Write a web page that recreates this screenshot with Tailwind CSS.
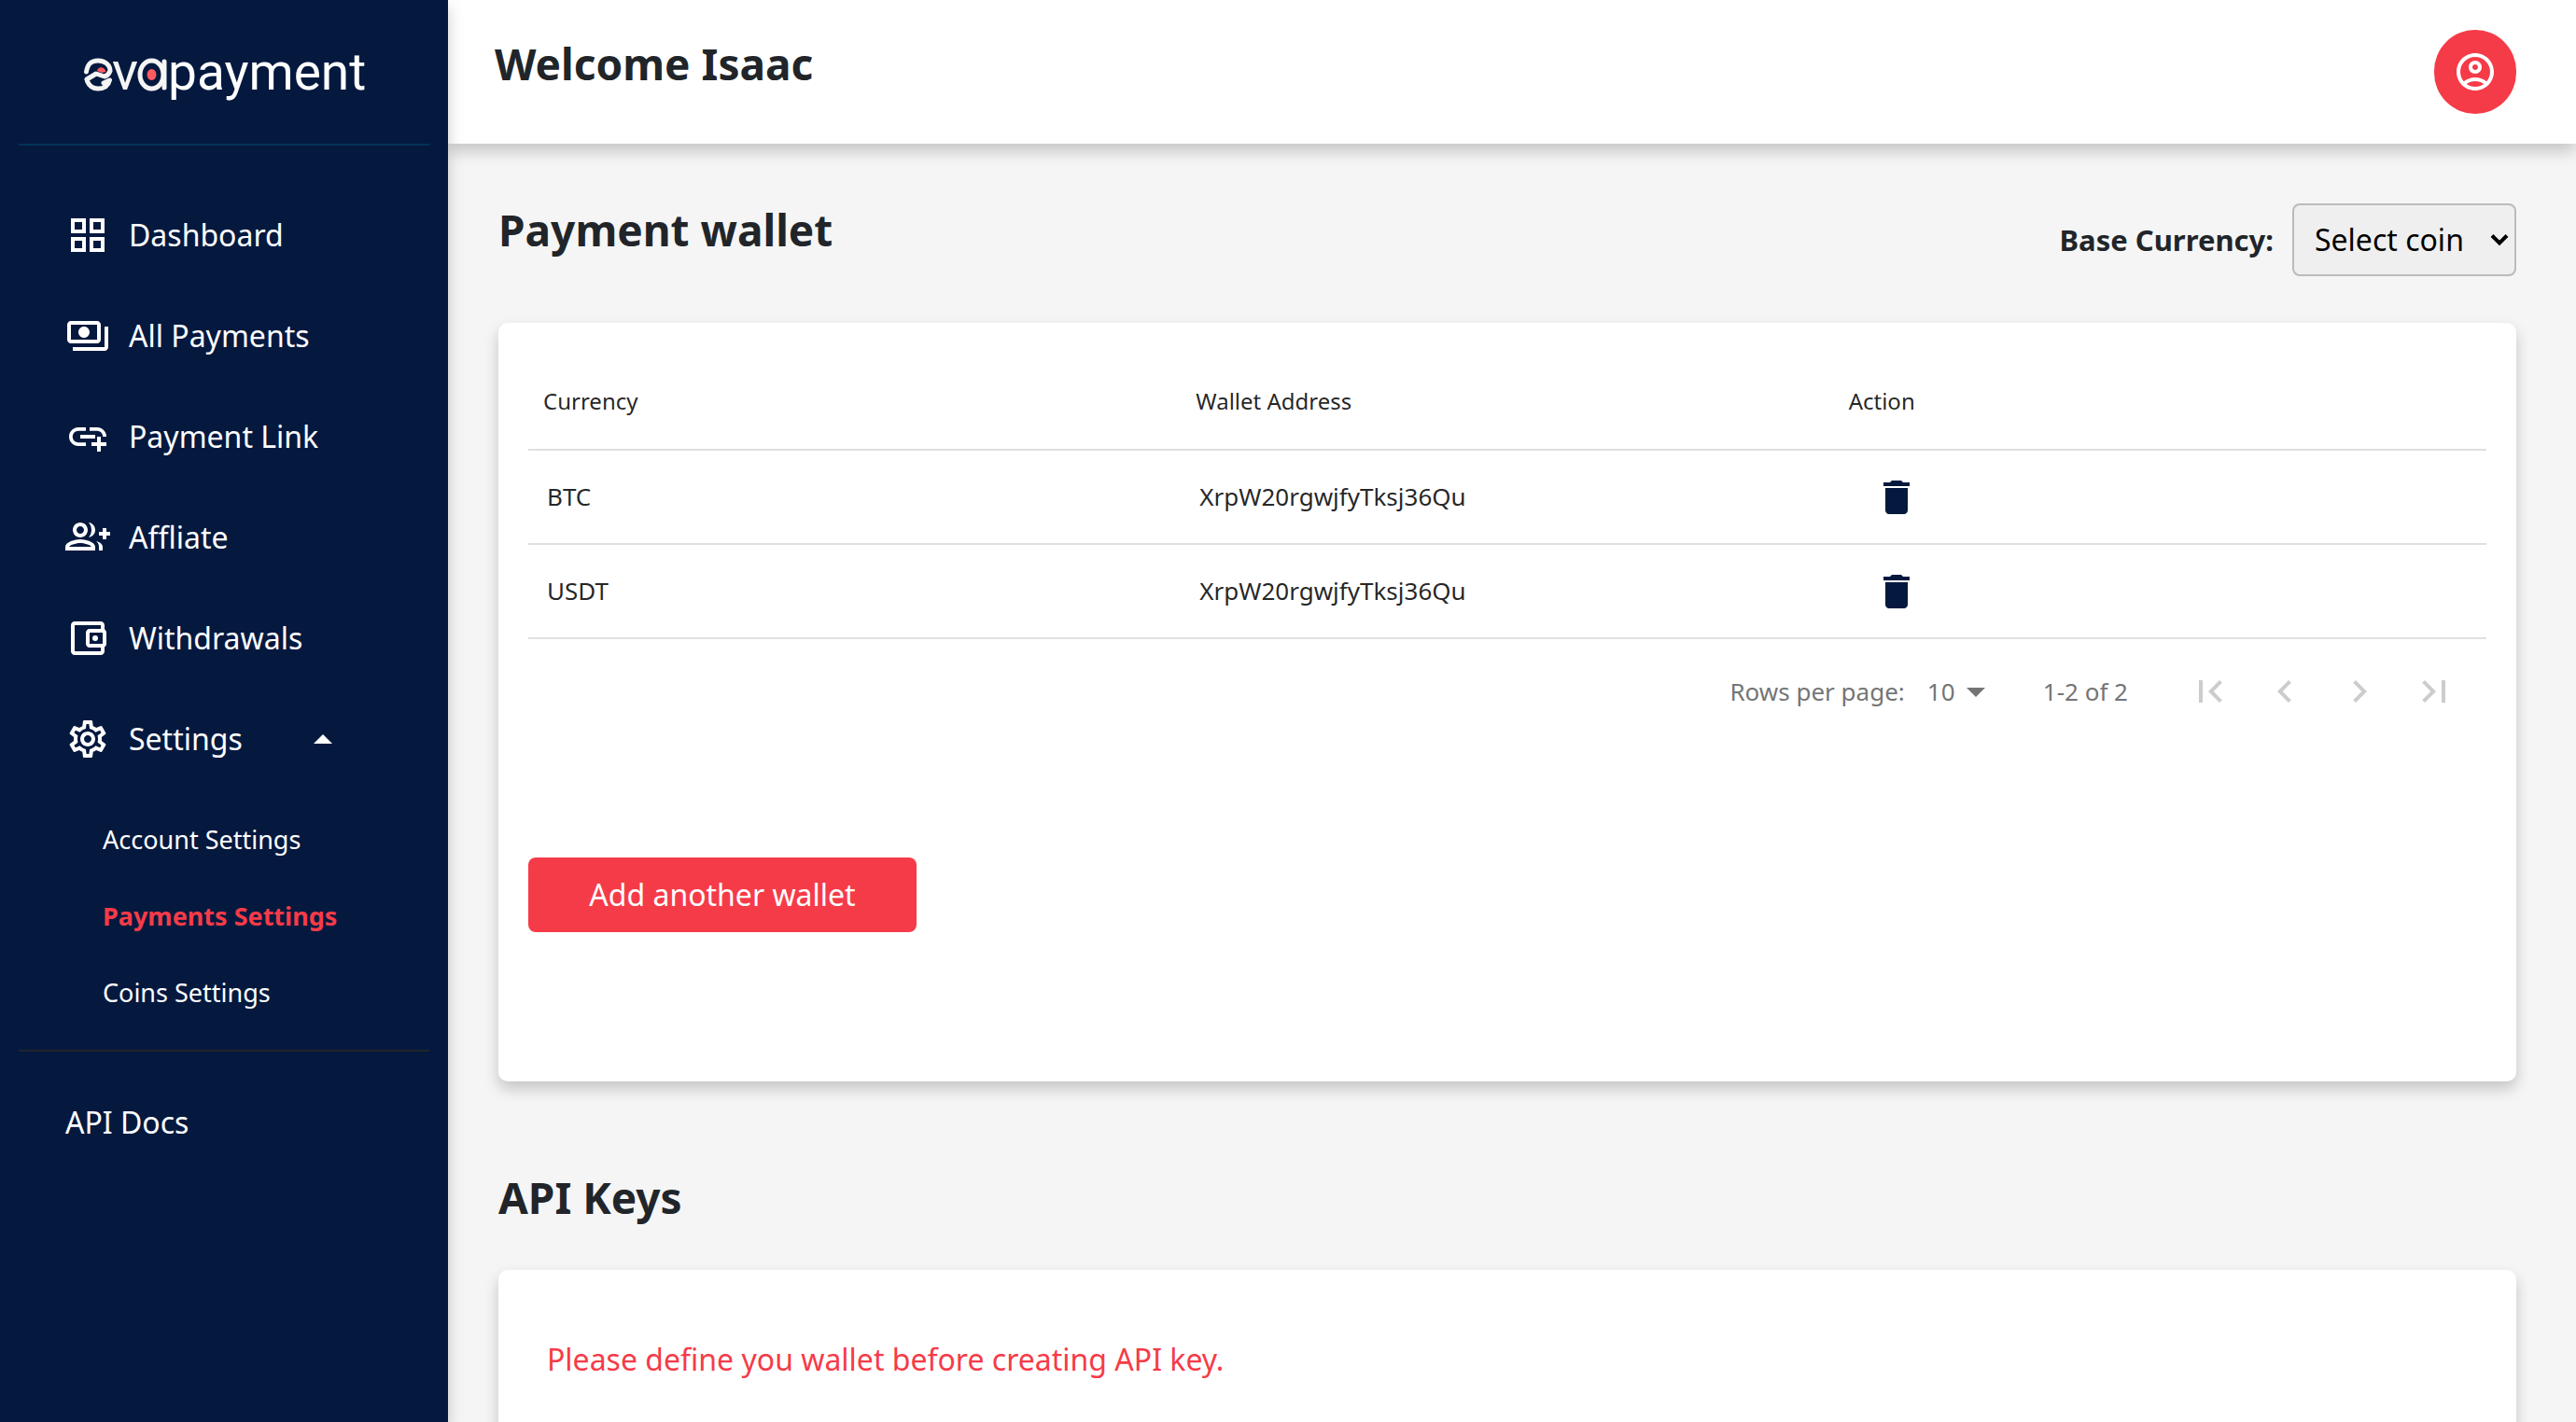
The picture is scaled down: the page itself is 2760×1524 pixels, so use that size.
<!DOCTYPE html>
<html lang="en">
<head>
<meta charset="utf-8">
<meta name="viewport" content="width=device-width, initial-scale=1">
<title>Evapayment – Payments Settings</title>
<script src="https://cdn.jsdelivr.net/npm/@tailwindcss/browser@4"></script>
</head>
<body class="flex h-screen items-stretch overflow-hidden bg-[#f5f5f5] font-['Noto_Sans',sans-serif] text-[#212529]">

<aside class="z-20 w-[480px] shrink-0 bg-[#05193f] px-5 text-white shadow-[0_8px_16px_rgba(0,0,0,0.2)]">
  <a href="#" aria-label="evapayment home" class="flex h-[154px] items-start justify-start pt-10 pl-[70px]">
    <svg class="h-[84px] w-[320px]" viewBox="0 -10 320 84" fill="none">
      <g stroke="#f4f4f4" stroke-width="5" stroke-linejoin="round" stroke-linecap="round">
        <path d="M2.500 27 C4 17 9 15 15 15 C23 15 28 20 28 26 Q26 31 22 32 L13 29 L3 35"/>
        <path d="M3.500 37 C6 43 10 45 15 45 C22 45 26 42 27.500 36 L21 39"/>
      </g>
      <path d="M14 26 C15 21 22 21 23.500 27 L19 28 Z" fill="#ff5a5f"/>
      <g stroke="#f4f4f4" stroke-width="5" stroke-linecap="round">
        <ellipse cx="72.500" cy="30" rx="12.500" ry="15"/>
        <path d="M86 16V44"/>
      </g>
      <ellipse cx="72.500" cy="30" rx="5" ry="6" fill="#ff5a5f"/>
      <text x="30" y="46" font-size="58" fill="#f4f4f4" font-family="Roboto, sans-serif">v</text>
      <text x="90" y="46" font-size="55" fill="#fff" font-family="Roboto, sans-serif">payment</text>
    </svg>
  </a>
  <div class="border-t-2 border-[#033358]"></div>
  <nav class="text-[32px] leading-[48px]">
    <ul class="flex flex-col gap-[60px] pt-[72px] pl-[50px]">
      <li><a href="#" class="flex items-center gap-5"><svg class="size-12" viewBox="0 0 24 24" fill="currentColor"><path d="M3 3v8h8V3H3zm6 6H5V5h4v4zm-6 4v8h8v-8H3zm6 6H5v-4h4v4zm4-16v8h8V3h-8zm6 6h-4V5h4v4zm-6 4v8h8v-8h-8zm6 6h-4v-4h4v4z"/></svg>Dashboard</a></li>
      <li><a href="#" class="flex items-center gap-5"><svg class="size-12" viewBox="0 0 24 24" fill="currentColor"><path d="M19 14V6c0-1.100-.9-2-2-2H3c-1.100 0-2 .9-2 2v8c0 1.100.9 2 2 2h14c1.100 0 2-.9 2-2zm-2 0H3V6h14v8zm-7-7c-1.660 0-3 1.340-3 3s1.340 3 3 3 3-1.340 3-3-1.340-3-3-3zm13 0v11c0 1.100-.9 2-2 2H4v-2h17V7h2z"/></svg>All Payments</a></li>
      <li><a href="#" class="flex items-center gap-5"><svg class="size-12" viewBox="0 0 24 24" fill="currentColor"><path d="M8 11h8v2H8zM20.100 12H22c0-2.760-2.240-5-5-5h-4v1.900h4c1.710 0 3.100 1.390 3.100 3.100zM3.900 12c0-1.710 1.390-3.100 3.100-3.100h4V7H7c-2.760 0-5 2.240-5 5s2.240 5 5 5h4v-1.900H7c-1.710 0-3.100-1.390-3.100-3.100zM19 12h-2v3h-3v2h3v3h2v-3h3v-2h-3z"/></svg>Payment Link</a></li>
      <li><a href="#" class="flex items-center gap-5"><svg class="size-12" viewBox="0 0 24 24" fill="currentColor"><path d="M22 9V7h-2v2h-2v2h2v2h2v-2h2V9zM8 12c2.210 0 4-1.790 4-4s-1.790-4-4-4-4 1.790-4 4 1.790 4 4 4zm0-6c1.100 0 2 .9 2 2s-.9 2-2 2-2-.9-2-2 .9-2 2-2zM8 13c-2.670 0-8 1.340-8 4v2h16v-2c0-2.660-5.330-4-8-4zm6 4H2c.2-.71 3.300-2 6-2 2.690 0 5.770 1.280 6 2zM12.510 4.050C13.430 5.110 14 6.490 14 8s-.57 2.890-1.490 3.950C14.470 11.700 16 10.040 16 8s-1.530-3.700-3.490-3.950zM16.530 13.830C17.420 14.660 18 15.700 18 17v2h2v-2c0-1.450-1.590-2.510-3.470-3.170z"/></svg>Affliate</a></li>
      <li><a href="#" class="flex items-center gap-5"><svg class="size-12" viewBox="0 0 24 24" fill="currentColor"><path d="M21 7.280V5c0-1.100-.9-2-2-2H5c-1.110 0-2 .9-2 2v14c0 1.100.89 2 2 2h14c1.100 0 2-.9 2-2v-2.280c.59-.35 1-.98 1-1.720V9c0-.74-.41-1.370-1-1.720zM20 9v6h-7V9h7zM5 19V5h14v2h-6c-1.100 0-2 .9-2 2v6c0 1.100.9 2 2 2h6v2H5z"/><circle cx="16" cy="12" r="1.500"/></svg>Withdrawals</a></li>
      <li>
        <button type="button" aria-expanded="true" class="flex w-full items-center gap-5"><svg class="size-12" viewBox="0 0 24 24" fill="currentColor"><path d="M19.430 12.980c.04-.32.07-.64.07-.98 0-.34-.03-.66-.07-.98l2.110-1.650c.19-.15.24-.42.12-.64l-2-3.460c-.09-.16-.26-.25-.44-.25-.06 0-.12.010-.17.030l-2.490 1c-.52-.4-1.080-.73-1.690-.98l-.38-2.650C14.460 2.180 14.250 2 14 2h-4c-.25 0-.46.18-.49.42l-.38 2.650c-.61.25-1.170.59-1.690.98l-2.490-1c-.06-.02-.12-.03-.18-.03-.17 0-.34.09-.43.25l-2 3.460c-.13.22-.07.49.12.64l2.110 1.650c-.04.32-.07.65-.07.98 0 .33.03.66.07.98l-2.110 1.650c-.19.15-.24.42-.12.64l2 3.460c.09.16.26.25.44.25.06 0 .12-.01.17-.03l2.490-1c.52.4 1.080.73 1.690.98l.38 2.650c.03.24.24.42.49.42h4c.25 0 .46-.18.49-.42l.38-2.650c.61-.25 1.170-.59 1.690-.98l2.490 1c.06.02.12.03.18.03.17 0 .34-.09.43-.25l2-3.460c.12-.22.07-.49-.12-.64l-2.110-1.650zm-1.980-1.710c.04.31.05.52.05.73 0 .21-.02.43-.05.73l-.14 1.130.89.7 1.080.84-.7 1.210-1.270-.51-1.040-.42-.9.680c-.43.32-.84.56-1.250.73l-1.060.43-.16 1.130-.2 1.350h-1.400l-.19-1.350-.16-1.130-1.060-.43c-.43-.18-.83-.41-1.230-.71l-.91-.7-1.060.43-1.270.51-.7-1.210 1.080-.84.89-.7-.14-1.130c-.03-.31-.05-.54-.05-.74s.02-.43.05-.73l.14-1.130-.89-.7-1.080-.84.7-1.210 1.270.51 1.040.42.9-.68c.43-.32.84-.56 1.250-.73l1.060-.43.16-1.130.2-1.350h1.390l.19 1.350.16 1.130 1.060.43c.43.18.83.41 1.230.71l.91.7 1.060-.43 1.270-.51.7 1.210-1.070.85-.89.7.14 1.130zM12 8c-2.210 0-4 1.790-4 4s1.790 4 4 4 4-1.790 4-4-1.790-4-4-4zm0 6c-1.100 0-2-.9-2-2s.9-2 2-2 2 .9 2 2-.9 2-2 2z"/></svg><span class="w-[164px] text-left">Settings</span><svg class="size-12" viewBox="0 0 24 24" fill="currentColor"><path d="M7 14.500l5-5 5 5z"/></svg></button>
        <ul class="flex flex-col gap-[42px] pt-16 pl-10 text-[27px] leading-10">
          <li><a href="#">Account Settings</a></li>
          <li><a href="#" aria-current="page" class="font-bold text-[#f63b48]">Payments Settings</a></li>
          <li><a href="#">Coins Settings</a></li>
        </ul>
      </li>
    </ul>
    <div class="mt-[41px] border-t-2 border-[#212529]"></div>
    <a href="#" class="mt-[52px] ml-[50px] block">API Docs</a>
  </nav>
</aside>

<div class="flex min-w-0 flex-1 flex-col">
  <header class="relative z-10 flex h-[154px] shrink-0 items-start justify-between bg-white pt-8 pr-16 pl-[50px] shadow-[0_8px_16px_rgba(0,0,0,0.2)]">
    <h1 class="pt-2 text-[46px] leading-[56px] font-bold">Welcome Isaac</h1>
    <button type="button" aria-label="Account" class="flex h-[90px] w-[88px] items-center justify-center rounded-full bg-[#f63b48] text-white">
      <svg class="size-12" viewBox="0 0 24 24" fill="currentColor"><path d="M12 2C6.480 2 2 6.480 2 12s4.480 10 10 10 10-4.480 10-10S17.520 2 12 2zM7.350 18.500C8.660 17.560 10.260 17 12 17s3.340.56 4.650 1.500C15.340 19.440 13.740 20 12 20s-3.340-.56-4.650-1.500zm10.790-1.380C16.450 15.800 14.320 15 12 15s-4.450.8-6.140 2.120C4.700 15.730 4 13.950 4 12c0-4.420 3.580-8 8-8s8 3.580 8 8c0 1.950-.7 3.730-1.860 5.120z"/><path d="M12 6c-1.930 0-3.500 1.570-3.500 3.500S10.070 13 12 13s3.500-1.570 3.500-3.500S13.930 6 12 6zm0 5c-.83 0-1.500-.67-1.500-1.500S11.170 8 12 8s1.500.67 1.500 1.500S12.830 11 12 11z"/></svg>
    </button>
  </header>

  <main class="min-h-0 flex-1 overflow-hidden pt-16 pr-16 pl-[54px]">
    <section>
      <div class="flex items-start justify-between">
        <h2 class="text-[46px] leading-[56px] font-bold">Payment wallet</h2>
        <div class="flex items-center gap-5">
          <label for="coin" class="text-[31px] leading-10 font-bold">Base Currency:</label>
          <div class="relative">
            <select id="coin" class="h-[78px] w-[240px] appearance-none rounded-lg border-2 border-[#bbb] bg-[#efefef] pl-[22px] text-[32px] text-black"><option>Select coin</option></select>
            <svg class="pointer-events-none absolute top-8 right-2 h-[14px] w-5" viewBox="0 0 20 14" fill="none" stroke="#000" stroke-width="4"><path d="M2 2.500L10 10.500L18 2.500"/></svg>
          </div>
        </div>
      </div>
      <div class="mt-[50px] rounded-[10px] bg-white px-8 pt-8 pb-40 shadow-[0_8px_16px_rgba(0,0,0,0.2)]">
        <table class="w-full table-fixed text-left text-black/87">
          <thead>
            <tr class="h-[104px] border-b-2 border-[#e0e0e0] text-[24px]">
              <th scope="col" class="pl-4 font-normal">Currency</th>
              <th scope="col" class="pl-4 font-normal">Wallet Address</th>
              <th scope="col" class="pl-4 font-normal">Action</th>
            </tr>
          </thead>
          <tbody class="text-[26px]">
            <tr class="h-[101px] border-b-2 border-[#e0e0e0]">
              <td class="pl-5">BTC</td>
              <td class="pl-5">XrpW20rgwjfyTksj36Qu</td>
              <td class="pl-[43px]"><button type="button" aria-label="Delete BTC wallet" class="block text-[#05193f]"><svg class="size-12" viewBox="0 0 24 24" fill="currentColor"><path d="M6 19c0 1.100.9 2 2 2h8c1.100 0 2-.9 2-2V7H6v12zM19 4h-3.500l-1-1h-5l-1 1H5v2h14V4z"/></svg></button></td>
            </tr>
            <tr class="h-[101px] border-b-2 border-[#e0e0e0]">
              <td class="pl-5">USDT</td>
              <td class="pl-5">XrpW20rgwjfyTksj36Qu</td>
              <td class="pl-[43px]"><button type="button" aria-label="Delete USDT wallet" class="block text-[#05193f]"><svg class="size-12" viewBox="0 0 24 24" fill="currentColor"><path d="M6 19c0 1.100.9 2 2 2h8c1.100 0 2-.9 2-2V7H6v12zM19 4h-3.500l-1-1h-5l-1 1H5v2h14V4z"/></svg></button></td>
            </tr>
          </tbody>
        </table>
        <div class="flex h-[112px] items-center justify-end pr-8 text-[26px] leading-8 text-[#757575]">
          <label for="rows">Rows per page:</label>
          <div class="ml-6 flex items-center">
            <select id="rows" class="w-8 appearance-none"><option>10</option></select>
            <svg class="-ml-1 size-12 shrink-0" viewBox="0 0 24 24" fill="currentColor"><path d="M7 10l5 5 5-5z"/></svg>
          </div>
          <span class="ml-12">1-2 of 2</span>
          <div class="ml-16 flex gap-8 text-[#ccc]">
            <button type="button" aria-label="First page" disabled><svg class="size-12" viewBox="0 0 24 24" fill="currentColor"><path d="M18.410 16.590L13.820 12l4.590-4.590L17 6l-6 6 6 6zM6 6h2v12H6z"/></svg></button>
            <button type="button" aria-label="Previous page" disabled><svg class="size-12" viewBox="0 0 24 24" fill="currentColor"><path d="M15.410 7.410L14 6l-6 6 6 6 1.410-1.410L10.830 12z"/></svg></button>
            <button type="button" aria-label="Next page" disabled><svg class="size-12" viewBox="0 0 24 24" fill="currentColor"><path d="M10 6L8.590 7.410 13.170 12l-4.580 4.590L10 18l6-6z"/></svg></button>
            <button type="button" aria-label="Last page" disabled><svg class="size-12" viewBox="0 0 24 24" fill="currentColor"><path d="M5.590 7.410L10.180 12l-4.590 4.590L7 18l6-6-6-6zM16 6h2v12h-2z"/></svg></button>
          </div>
        </div>
        <button type="button" class="mt-[122px] block h-20 w-[416px] rounded-lg bg-[#f63b48] text-[32px] text-white">Add another wallet</button>
      </div>
    </section>
    <section class="pt-[96px]">
      <h2 class="text-[46px] leading-[56px] font-bold">API Keys</h2>
      <div class="mt-[50px] rounded-[10px] bg-white px-[52px] pt-[76px] pb-40 shadow-[0_8px_16px_rgba(0,0,0,0.2)]">
        <p class="text-[32px] leading-10 text-[#f63b48]">Please define you wallet before creating API key.</p>
      </div>
    </section>
  </main>
</div>
</body>
</html>
